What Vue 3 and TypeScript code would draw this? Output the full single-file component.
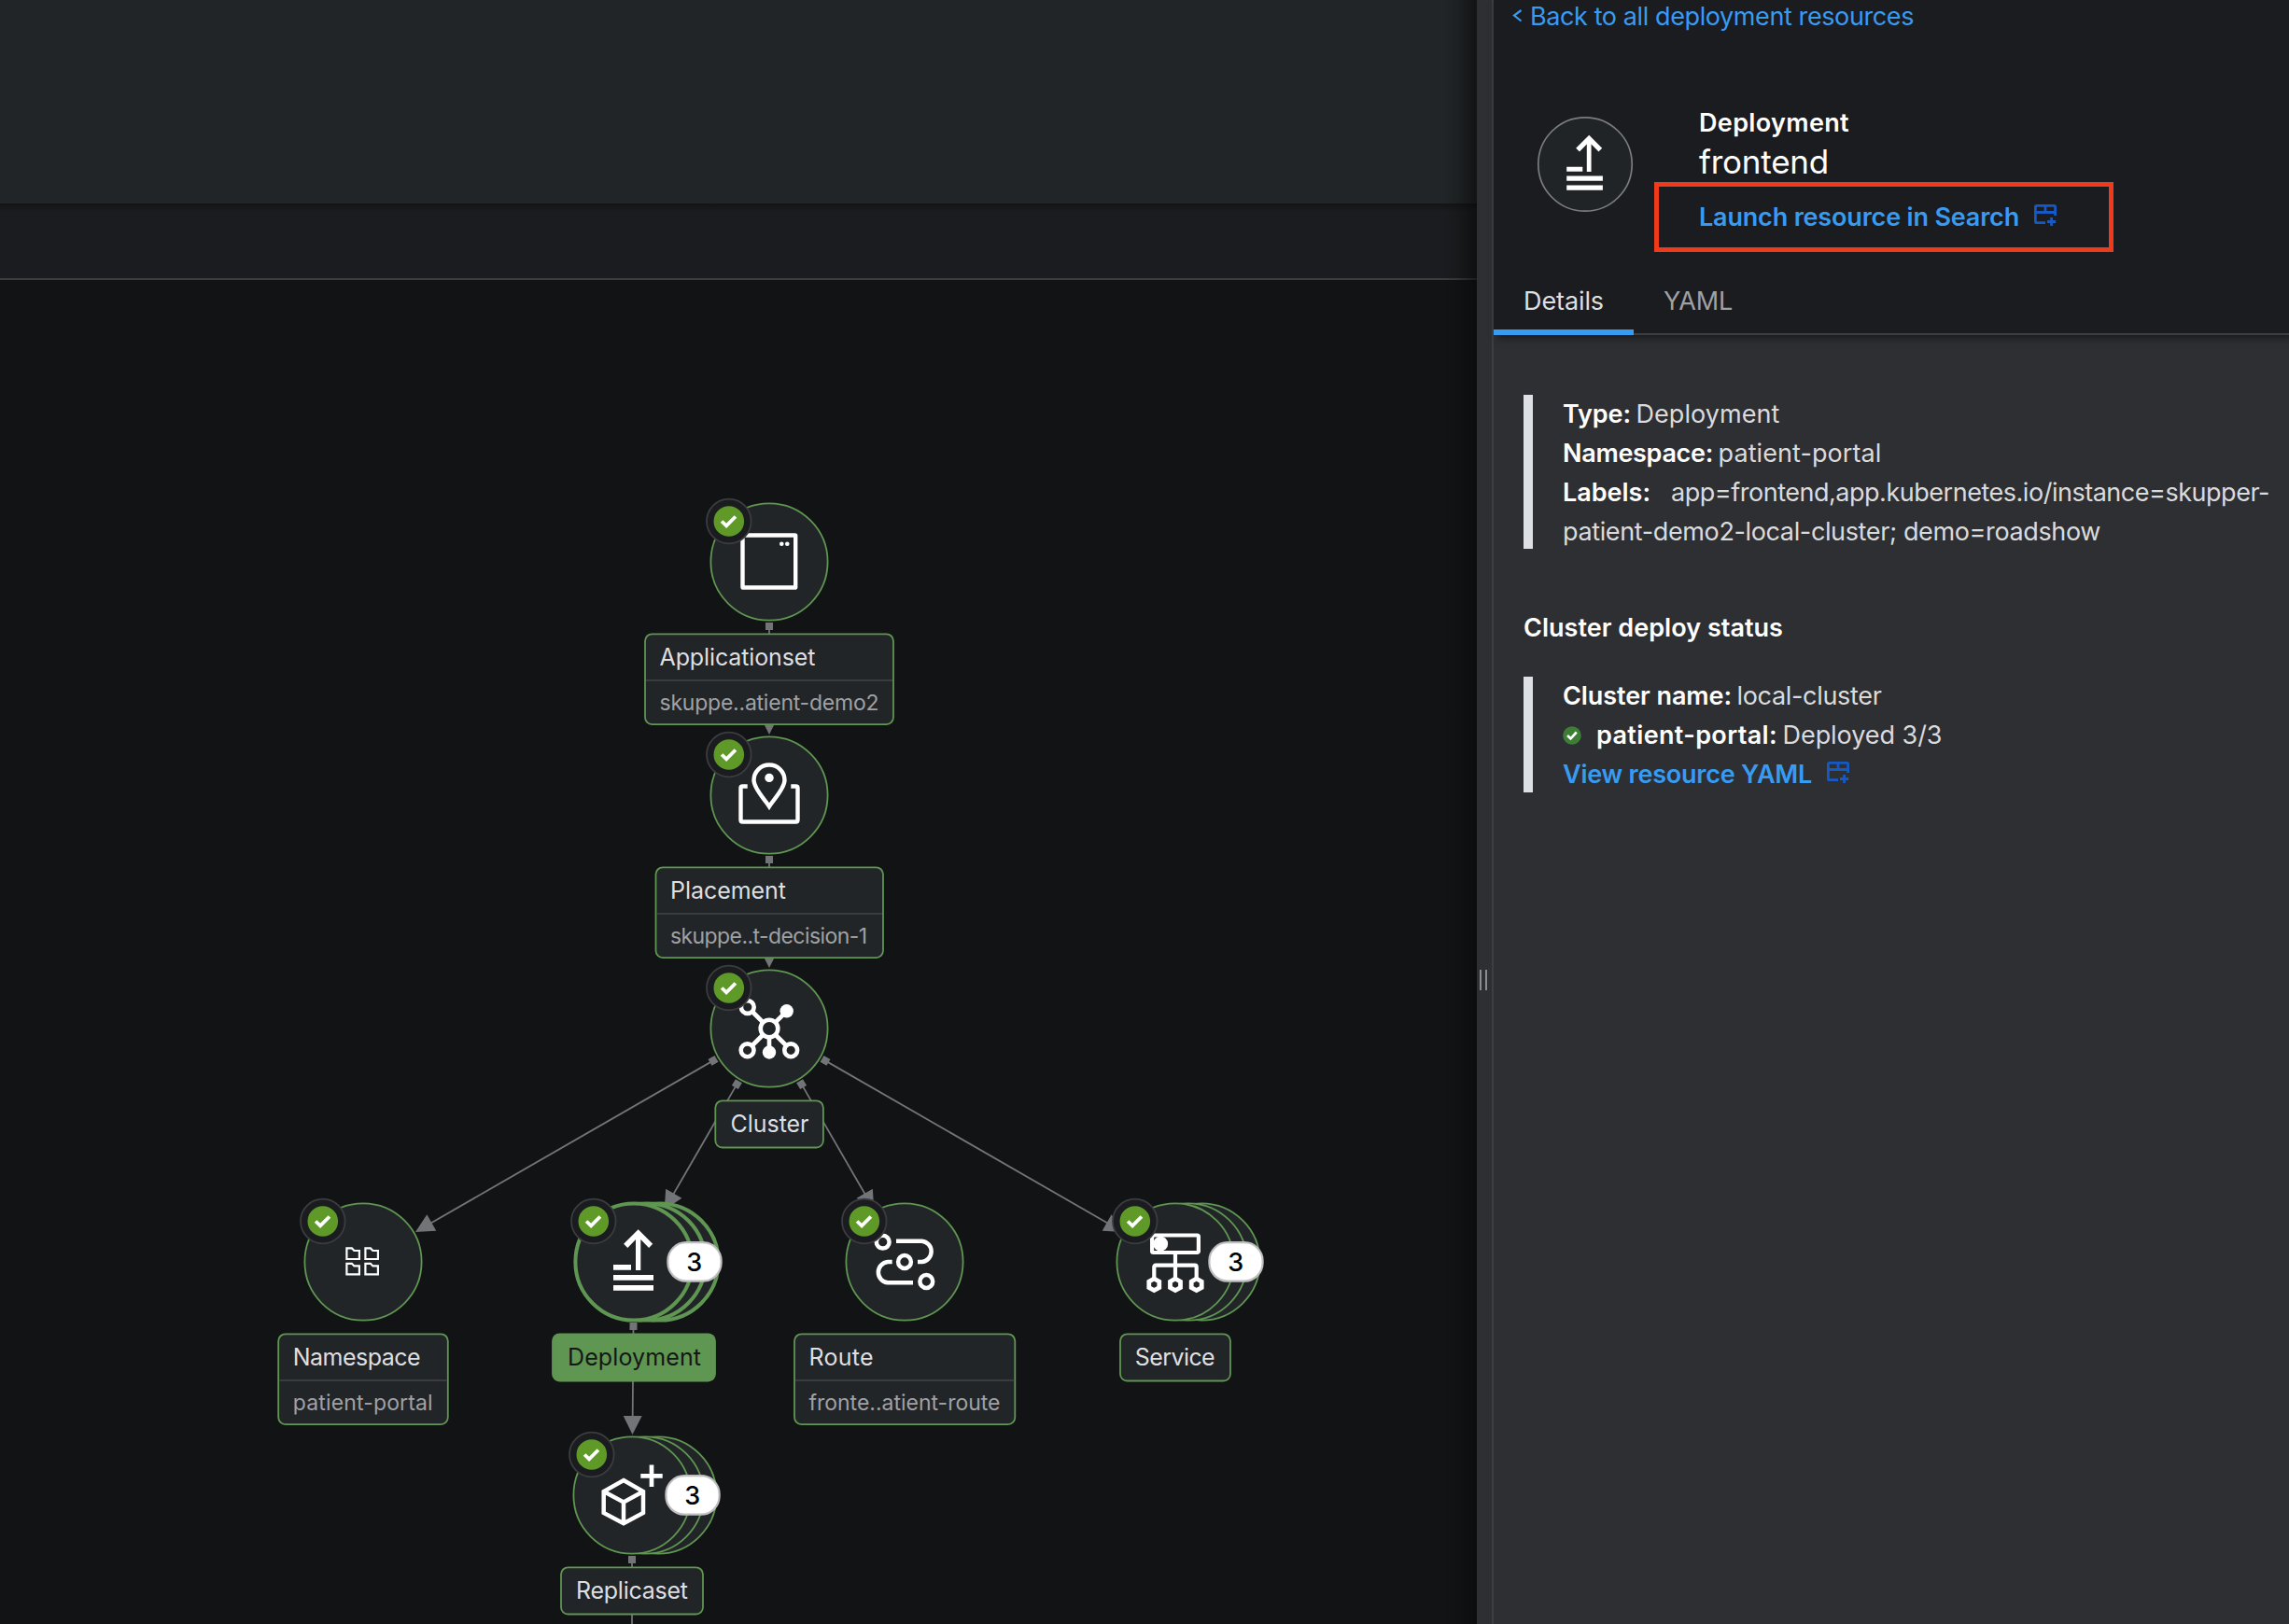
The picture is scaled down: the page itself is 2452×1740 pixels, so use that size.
<script setup lang="ts">
interface Sized { text: string; width: number }
interface TopoNode {
  id: string
  x: number
  y: number
  title: Sized
  sub?: Sized
  box: { x: number; w: number }
  textX: number
  stacked?: boolean
  selected?: boolean
}
interface Edge { x1: number; y1: number; x2: number; y2: number }

const nodes: TopoNode[] = [
  { id: 'applicationset', x: 824, y: 602, title: { text: 'Applicationset', width: 167 }, sub: { text: 'skuppe..atient-demo2', width: 235 }, box: { x: 691, w: 266 }, textX: 706.5 },
  { id: 'placement', x: 824, y: 852, title: { text: 'Placement', width: 124 }, sub: { text: 'skuppe..t-decision-1', width: 211 }, box: { x: 702.5, w: 243.5 }, textX: 718 },
  { id: 'cluster', x: 824, y: 1102, title: { text: 'Cluster', width: 84 }, box: { x: 766.3, w: 115.6 }, textX: 782.5 },
  { id: 'namespace', x: 389, y: 1352, title: { text: 'Namespace', width: 137 }, sub: { text: 'patient-portal', width: 150 }, box: { x: 298.2, w: 181.6 }, textX: 313.7 },
  { id: 'deployment', x: 679, y: 1352, title: { text: 'Deployment', width: 143 }, box: { x: 592, w: 174 }, textX: 608, stacked: true, selected: true },
  { id: 'route', x: 969, y: 1352, title: { text: 'Route', width: 69 }, sub: { text: 'fronte..atient-route', width: 205 }, box: { x: 851, w: 236.3 }, textX: 866.5 },
  { id: 'service', x: 1259, y: 1352, title: { text: 'Service', width: 86 }, box: { x: 1200, w: 118 }, textX: 1215.7, stacked: true },
  { id: 'replicaset', x: 677, y: 1602, title: { text: 'Replicaset', width: 120 }, box: { x: 601, w: 152 }, textX: 617, stacked: true },
]

const edges: Edge[] = [
  { x1: 824, y1: 671, x2: 824, y2: 787 },
  { x1: 824, y1: 921, x2: 824, y2: 1037 },
  { x1: 764, y1: 1136.4, x2: 445, y2: 1320 },
  { x1: 789.4, y1: 1161.6, x2: 711.8, y2: 1296 },
  { x1: 858.6, y1: 1161.6, x2: 936.2, y2: 1296 },
  { x1: 884, y1: 1136.4, x2: 1203, y2: 1320 },
  { x1: 678.5, y1: 1421, x2: 677.5, y2: 1537 },
  { x1: 677, y1: 1671, x2: 677, y2: 1787 },
]
const edgeAngle = (e: Edge) => (Math.atan2(e.y2 - e.y1, e.x2 - e.x1) * 180) / Math.PI
const edgeLength = (e: Edge) => Math.hypot(e.x2 - e.x1, e.y2 - e.y1)

// Tracks a run of text out to a given width.
const vFit = {
  mounted(el: HTMLElement, binding: { value: number }) {
    const count = (el.textContent ?? '').length
    const natural = el.getBoundingClientRect().width
    el.style.letterSpacing = `${(binding.value - natural) / count}px`
  },
}
</script>

<template>
  <div class="app">
    <main class="topology">
      <div class="masthead"></div>
      <div class="toolbar"></div>
      <div class="canvas">
        <svg class="graph" viewBox="0 300 1582 1440" width="1582" height="1440">
          <g v-for="(e, i) in edges" :key="i" :transform="`translate(${e.x1} ${e.y1}) rotate(${edgeAngle(e)})`" fill="#737477">
            <rect x="-4" y="-4" width="8" height="8" />
            <rect x="0" y="-0.9" :width="edgeLength(e) - 18" height="1.8" />
            <path :d="`M${edgeLength(e)} 0l-20 -10v20z`" />
          </g>

          <g v-for="n in nodes" :key="n.id">
            <g :transform="`translate(${n.x} ${n.y})`">
              <g class="disc" :class="{ 'disc--selected': n.selected }">
                <template v-if="n.stacked">
                  <circle cx="28" r="62.6" />
                  <circle cx="14" r="62.6" />
                </template>
                <circle r="62.6" />
              </g>

              <g v-if="n.id === 'applicationset'" class="line">
                <rect x="-28.5" y="-28.5" width="56.7" height="56" rx="0.6" stroke-width="4.4" />
                <circle class="solid" cx="13.3" cy="-19.3" r="2.3" />
                <circle class="solid" cx="19.3" cy="-19.3" r="2.3" />
              </g>
              <g v-else-if="n.id === 'placement'" class="line" stroke-width="4.4">
                <path d="M0 12C-4 5.500 -16.500 -7 -16.500 -16A16.500 16.500 0 0 1 16.500 -16C16.500 -7 4 5.500 0 12Z" />
                <circle class="solid" cy="-18.600" r="4.700" />
                <path d="M-23.300 -9.500H-28.500Q-30.500 -9.500 -30.500 -7.500V26.500Q-30.500 28.500 -28.500 28.500H28.500Q30.500 28.500 30.500 26.500V-7.500Q30.500 -9.500 28.500 -9.500H23.300" />
              </g>
              <g v-else-if="n.id === 'cluster'" class="line" stroke-width="4.6">
                <path d="M-18 -18L-6 -6M6 -6L18.700 -18.700M-18 18L-6 6M18 18L6 6M0 9V25" />
                <circle r="9.300" />
                <circle cx="-23.200" cy="-23" r="6.900" />
                <circle cx="-23.400" cy="23.300" r="6.900" />
                <circle cx="23.200" cy="23.300" r="6.900" />
                <circle class="solid" cx="18.700" cy="-18.700" r="7.200" />
                <circle class="solid" cx="0" cy="25.500" r="7.200" />
              </g>
              <g v-else-if="n.id === 'namespace'" class="line" stroke-width="2.2">
                <path
                  v-for="(p, k) in [[-17.6, -14.6], [2.4, -14.6], [-17.6, 1.8], [2.4, 1.8]]"
                  :key="k"
                  :transform="`translate(${p[0]} ${p[1]})`"
                  d="M0 0H5.500L8 2.600H13.500V11.600H0Z"
                />
              </g>
              <g v-else-if="n.id === 'deployment'" fill="#fff">
                <path d="M2 8.900V-24L-6.700 -14.900L-10.900 -19.200L4.700 -34.700L20.200 -19.200L16.100 -14.900L7.300 -24V8.900Z" />
                <path d="M-22 3H-3V8.700H-22ZM-22 14H21V19.700H-22ZM-22 25H21V30.700H-22Z" />
              </g>
              <g v-else-if="n.id === 'route'" class="line" stroke-width="4.5">
                <circle r="6.900" />
                <circle cx="-23.300" cy="-21.300" r="6.900" />
                <circle cx="23.300" cy="21" r="6.900" />
                <path d="M-9 -22.300H18.500A11.200 11.200 0 0 1 18.500 0H14M9 22.300H-18A11.200 11.200 0 0 1 -18 0H-13.300" />
              </g>
              <g v-else-if="n.id === 'service'" class="line" stroke-width="4.200">
                <rect x="-24.900" y="-28.500" width="49.800" height="18.500" rx="1.500" />
                <circle class="solid" cx="-15.800" cy="-19.300" r="7.900" />
                <path d="M0 -10V18M-22.700 18V5.500Q-22.700 3.700 -20.900 3.700H20.900Q22.700 3.700 22.700 5.500V18" />
                <path
                  v-for="hx in [-22.7, 0, 22.7]"
                  :key="hx"
                  :transform="`translate(${hx} 24.3)`"
                  stroke-width="4.800"
                  d="M0 -6.300L5.500 -3.200V3.200L0 6.300L-5.500 3.200V-3.200Z"
                />
              </g>
              <g v-else class="line" stroke-width="4.500">
                <path d="M-9 -16L12 -4V19L-9 30.300L-30.300 19V-4ZM-30.300 -4L-9 7.500L12 -4M-9 7V30" />
                <path d="M21 -32.400V-9M9.300 -20.700H32.700" stroke-width="4.700" />
              </g>

              <g transform="translate(-43.2 -43.5)">
                <circle r="23.8" fill="#1b1c20" stroke="#3b3c40" stroke-width="1.800" />
                <circle r="16.300" fill="#5f9a29" />
                <path d="M-7.700 0L-2.700 4.900L7.100 -5" fill="none" stroke="#fff" stroke-width="3.800" />
              </g>

              <g v-if="n.stacked">
                <rect x="36.4" y="-20.8" width="57.2" height="41.400" rx="19.500" fill="#fff" stroke="#bfbdbf" stroke-width="2.200" />
                <text class="count" x="64.800" y="9.500">3</text>
              </g>
            </g>

            <rect
              class="label"
              :class="{ 'label--selected': n.selected }"
              :x="n.box.x"
              :y="n.y + 77.3"
              :width="n.box.w"
              :height="n.sub ? 96.8 : 50.2"
              rx="7.500"
            />
            <text class="title" :class="{ 'title--selected': n.selected }" :x="n.textX" :y="n.y + 111" :textLength="n.title.width">{{ n.title.text }}</text>
            <template v-if="n.sub">
              <rect :x="n.box.x + 1" :y="n.y + 126" :width="n.box.w - 2" height="1.900" fill="#3b3d40" />
              <text class="sub" :x="n.textX" :y="n.y + 158.800" :textLength="n.sub.width">{{ n.sub.text }}</text>
            </template>
          </g>
        </svg>
      </div>
      <div class="edge-shade"></div>
    </main>

    <div class="splitter"><i></i><i></i></div>

    <aside class="panel">
      <header class="panel-head">
        <a class="back">
          <svg width="11" height="14" viewBox="0 0 11 14"><path d="M9.500 1L2 6.500L9.500 12.500" fill="none" stroke="#389bf2" stroke-width="2.200" /></svg>
          <span v-fit="411">Back to all deployment resources</span>
        </a>
        <div class="resource">
          <svg class="resource-icon" width="104" height="104" viewBox="-52 -52 104 104">
            <circle r="50.200" fill="#212427" stroke="#7b7c7f" stroke-width="1.700" />
            <g fill="#fff" transform="scale(0.9)">
              <path d="M2 8.900V-24L-6.700 -14.900L-10.900 -19.200L4.700 -34.700L20.200 -19.200L16.100 -14.900L7.300 -24V8.900Z" />
              <path d="M-22 3H-3V8.700H-22ZM-22 14H21V19.700H-22ZM-22 25H21V30.700H-22Z" />
            </g>
          </svg>
          <div class="resource-text">
            <b class="kind"><span v-fit="161">Deployment</span></b>
            <span class="name"><span v-fit="139">frontend</span></span>
            <a class="launch">
              <b v-fit="343">Launch resource in Search</b>
              <svg class="ext" width="24" height="24" viewBox="0 0 24 24"><path d="M22.600 12V2.600Q22.600 1.400 21.400 1.400H2.600Q1.400 1.400 1.400 2.600V18.500Q1.400 19.700 2.600 19.700H12M1.400 8.500H22.600M12 1.400V8.500M18.600 14V23M14 18.500H23.200" /></svg>
            </a>
          </div>
        </div>
        <nav class="tabs">
          <span class="tab tab--active"><span v-fit="86">Details</span></span>
          <span class="tab"><span v-fit="74">YAML</span></span>
        </nav>
      </header>

      <section class="details">
        <div class="block block--four">
          <p><b v-fit="73">Type:</b><span v-fit="154">Deployment</span></p>
          <p><b v-fit="161">Namespace:</b><span v-fit="175">patient-portal</span></p>
          <p><b v-fit="94">Labels:</b><span class="wide-gap" v-fit="641">app=frontend,app.kubernetes.io/instance=skupper-</span></p>
          <p><span v-fit="576">patient-demo2-local-cluster; demo=roadshow</span></p>
        </div>
        <h3><span v-fit="278">Cluster deploy status</span></h3>
        <div class="block block--three">
          <p><b v-fit="181">Cluster name:</b><span v-fit="155">local-cluster</span></p>
          <p>
            <svg class="ok" width="20" height="20" viewBox="-10 -10 20 20"><circle r="9.800" fill="#3e7d35" /><path d="M-5 0L-1.500 3.300L4.800 -3.500" fill="none" stroke="#fff" stroke-width="2.600" /></svg>
            <b v-fit="194">patient-portal:</b><span v-fit="171">Deployed 3/3</span>
          </p>
          <p>
            <a><b v-fit="267">View resource YAML</b></a>
            <svg class="ext" width="24" height="24" viewBox="0 0 24 24"><path d="M22.600 12V2.600Q22.600 1.400 21.400 1.400H2.600Q1.400 1.400 1.400 2.600V18.500Q1.400 19.700 2.600 19.700H12M1.400 8.500H22.600M12 1.400V8.500M18.600 14V23M14 18.500H23.200" /></svg>
          </p>
        </div>
      </section>
    </aside>
  </div>
</template>

<style>
body {
  margin: 0;
  overflow: hidden;
  background: #121315;
}
</style>

<style scoped>
.app {
  display: flex;
  width: 2452px;
  height: 1740px;
  overflow: hidden;
  font-family: Inter, "Liberation Sans", sans-serif;
  font-size: 27px;
  color: #dadbdc;
}
.topology {
  position: relative;
  display: flex;
  flex-direction: column;
  width: 1582px;
  background: #121315;
}
.masthead {
  height: 218px;
  background: #212527;
}
.toolbar {
  box-sizing: border-box;
  height: 82px;
  background: linear-gradient(#131416 0, #1b1c1f 9px);
  border-bottom: 2px solid #3b3c3f;
}
.canvas {
  flex: 1;
}
.graph {
  display: block;
}
.edge-shade {
  position: absolute;
  top: 0;
  right: 0;
  bottom: 0;
  width: 36px;
  background: linear-gradient(90deg, transparent, rgba(8, 8, 8, 0.14) 40%, rgba(8, 8, 8, 0.62));
}
.disc circle {
  fill: #212528;
  stroke: #5f9651;
  stroke-width: 1.8px;
}
.disc--selected circle {
  stroke-width: 4px;
}
.line {
  fill: none;
  stroke: #fff;
}
.solid {
  fill: #fff;
  stroke: none;
}
.count {
  font-size: 27px;
  font-weight: 500;
  fill: #000;
  text-anchor: middle;
}
.label {
  fill: #212528;
  stroke: #5f9651;
  stroke-width: 1.8px;
}
.label--selected {
  fill: #5f9651;
}
.title {
  font-size: 25px;
  fill: #dedfe0;
}
.title--selected {
  fill: #151617;
}
.sub {
  font-size: 23px;
  fill: #a0a1a4;
}

.splitter {
  box-sizing: border-box;
  display: flex;
  align-items: center;
  justify-content: center;
  gap: 4px;
  width: 18px;
  padding: 359px 2px 0 0;
  background: #2e2f33;
  border-right: 2px solid #3d3e41;
}
.splitter i {
  width: 2px;
  height: 22px;
  background: #8b8c8f;
}

.panel {
  display: flex;
  flex-direction: column;
  width: 852px;
  background: #2e2f33;
}
.panel-head {
  position: relative;
  box-sizing: border-box;
  height: 359px;
  background: #1b1c1f;
  border-bottom: 2px solid #3d3e41;
  box-shadow: 4px 3px 8px rgba(8, 8, 8, 0.55);
}
.panel span,
.panel b {
  white-space: nowrap;
}
.back {
  display: flex;
  align-items: center;
  gap: 8px;
  height: 34px;
  padding-left: 20px;
  color: #389bf2;
}
.back span {
  display: block;
}
.resource {
  display: flex;
  height: 190px;
  margin-top: 77px;
  padding-left: 46px;
}
.resource-icon {
  display: block;
  margin-top: 13px;
}
.resource-text {
  display: flex;
  flex-direction: column;
  align-items: flex-start;
  margin-left: 70px;
  color: #fff;
}
.kind {
  height: 41px;
  line-height: 41px;
  font-weight: 600;
}
.name {
  height: 43px;
  font-size: 35px;
  line-height: 43px;
}
.launch {
  box-sizing: border-box;
  display: flex;
  align-items: center;
  gap: 16px;
  width: 492px;
  height: 75px;
  margin-left: -48px;
  padding-left: 43px;
  border: 5px solid #f03a1c;
  color: #389bf2;
}
b,
h3 {
  font-weight: 600;
}
.ext {
  margin-bottom: 3px;
}
.ext path {
  fill: none;
  stroke: #1659c2;
  stroke-width: 2.8px;
}
.tabs {
  display: flex;
  height: 58px;
}
.tab {
  box-sizing: border-box;
  height: 58px;
  padding: 0 32px;
  line-height: 44px;
  color: #a0a1a4;
}
.tab--active {
  width: 150px;
  color: #dedfe0;
  border-bottom: 6px solid #389bf2;
}
.details {
  padding: 64px 32px 0;
}
.block {
  box-sizing: border-box;
  padding-left: 32px;
  border-left: 10px solid #dde1e6;
}
.block--four {
  height: 165px;
}
.block--three {
  height: 124px;
}
.block p {
  display: flex;
  align-items: center;
  height: 41.8px;
  margin: 0;
}
.block b {
  color: #fff;
}
.block b + span {
  margin-left: 5.5px;
}
.block b + .wide-gap {
  margin-left: 22px;
}
.block a b {
  color: #389bf2;
}
.block .ext {
  margin-left: 16px;
}
.ok {
  margin-right: 16px;
}
h3 {
  height: 42px;
  margin: 64px 0 31px;
  font-size: 27px;
  line-height: 42px;
  color: #fff;
}
</style>
